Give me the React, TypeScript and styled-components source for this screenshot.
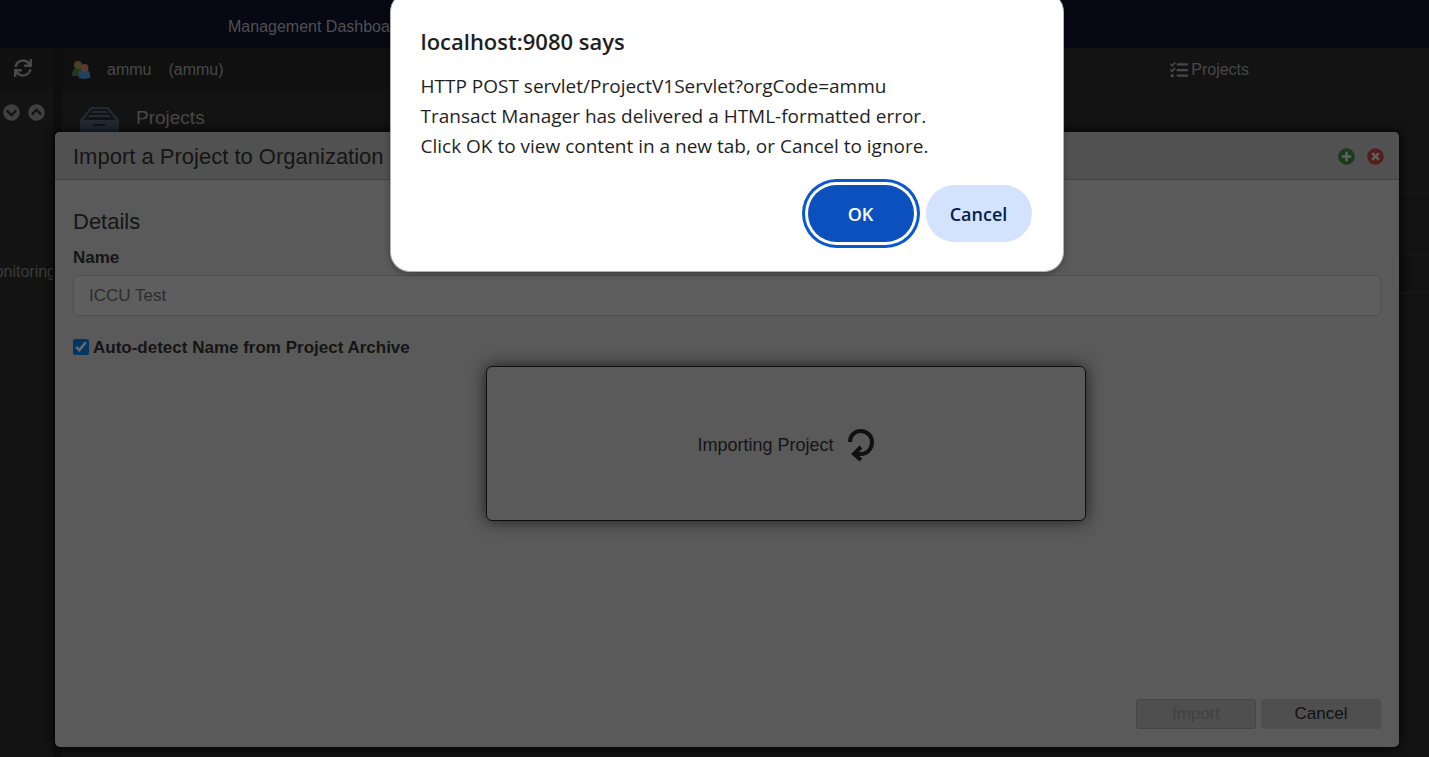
import React from "react";
import styled, { createGlobalStyle } from "styled-components";
import {
  FaChevronCircleDown,
  FaChevronCircleUp,
  FaPlusCircle,
  FaSync,
  FaTasks,
  FaTimesCircle,
} from "react-icons/fa";

const GlobalStyle = createGlobalStyle`
  * { box-sizing: border-box; }
  body {
    margin: 0;
    background: #131313;
    color: #484848;
    font: 16px/24px "Liberation Sans", Arial, sans-serif;
    overflow: hidden;
  }
  button, input { font: inherit; color: inherit; }
  h1, h2, h3, p { margin: 0; font-weight: 400; }
`;

const Page = styled.div`
  position: relative;
  display: flex;
  flex-direction: column;
  min-height: 100vh;
  overflow: hidden;
`;

const TopBar = styled.nav`
  display: flex;
  align-items: center;
  height: 48px;
  padding: 6px 228px 0;
  background: #060814;
`;

const TopLink = styled.a`
  color: #505050;
  text-decoration: none;
`;

const Workspace = styled.div`
  display: flex;
  flex: 1;
`;

const Sidebar = styled.aside`
  width: 53px;
  overflow: hidden;
`;

const SidebarHead = styled.div`
  display: flex;
  align-items: center;
  height: 42px;
  padding: 0 14px 2px;
  background: #101010;
`;

const SidebarTools = styled.div`
  display: flex;
  gap: 8px;
  padding: 14px 3px;
`;

const IconButton = styled.button<{ $size: number; $tone: string }>`
  display: flex;
  padding: 0;
  border: 0;
  background: none;
  color: ${(p) => p.$tone};
  font-size: ${(p) => p.$size}px;
`;

const TreeItem = styled.a`
  display: flex;
  justify-content: flex-end;
  width: 56px;
  padding-top: 125px;
  color: #3c3c3c;
  text-decoration: none;
  white-space: nowrap;
`;

const Splitter = styled.div`
  width: 9px;
  background: #0e0e0e;
`;

const Main = styled.main`
  flex: 1;
`;

const MainHead = styled.div`
  display: flex;
  height: 42px;
`;

const Crumbs = styled.div`
  display: flex;
  align-items: center;
  flex: 1;
  gap: 17px;
  padding: 2px 10px 0;
  background: #101010;
`;

const Tabs = styled.div`
  width: 28%;
  padding: 10px 0 0 124px;
`;

const TabLink = styled.a`
  display: flex;
  align-items: center;
  gap: 3px;
  color: #484848;
  text-decoration: none;
  svg { font-size: 18px; }
`;

const SectionHead = styled.div`
  display: flex;
  align-items: flex-start;
  gap: 17px;
  height: 104px;
  padding: 16px 18px;
  border-bottom: 1px solid #1a1a1a;
`;

const SectionTitle = styled.h1`
  font-size: 19px;
  line-height: 24px;
`;

const ListRow = styled.div<{ $height: number; $dark?: boolean }>`
  height: ${(p) => p.$height}px;
  padding-right: 20px;
  border-bottom: 1px solid #1a1a1a;
  background: ${(p) => (p.$dark ? "#101010" : "transparent")};
  background-clip: content-box;
`;

const ModalLayer = styled.div`
  position: absolute;
  inset: 0;
  display: flex;
  padding: 132px 30px 10px 55px;
`;

const Modal = styled.section`
  position: relative;
  display: flex;
  flex: 1;
  flex-direction: column;
  border-radius: 5px;
  background: #5a5a5a;
  color: #151515;
  box-shadow: 0 0 12px #000000;
`;

const ModalHead = styled.header`
  display: flex;
  align-items: center;
  justify-content: space-between;
  height: 48px;
  padding: 2px 15px 0 18px;
  border-bottom: 1px solid #434343;
  border-radius: 5px 5px 0 0;
  background: #515151;
`;

const Heading = styled.h2`
  font-size: 22px;
  line-height: 32px;
`;

const HeadActions = styled.div`
  display: flex;
  gap: 12px;
`;

const RoundButton = styled(IconButton)`
  border-radius: 50%;
  background: radial-gradient(#606060 50%, transparent 55%);
`;

const Form = styled.form`
  display: flex;
  flex: 1;
  flex-direction: column;
  padding: 26px 18px 18px;
`;

const FieldLabel = styled.label`
  margin: 8px 0 5px;
  font-size: 17px;
  font-weight: 700;
`;

const TextInput = styled.input`
  height: 41px;
  padding: 0 15px;
  border: 1px solid #505050;
  border-radius: 5px;
  background: #5e5e5e;
  color: #2c2c2c;
  font-size: 17px;
`;

const CheckRow = styled.label`
  display: flex;
  align-items: center;
  gap: 4px;
  margin-top: 20px;
  font-size: 17px;
  font-weight: 700;
`;

const CheckBox = styled.input`
  width: 16px;
  height: 16px;
  margin: 0 0 2px;
  accent-color: #0080e8;
  filter: brightness(0.42);
`;

const FormActions = styled.div`
  display: flex;
  justify-content: flex-end;
  gap: 5px;
  margin-top: auto;
`;

const FormButton = styled.button`
  width: 120px;
  height: 30px;
  padding: 0;
  border: 1px solid #4f4f4f;
  border-radius: 3px;
  background: #4f4f4f;
  color: #111111;
  font-size: 17px;
  &:disabled {
    border-color: #454545;
    color: #414141;
  }
`;

const ProgressLayer = styled.div`
  position: absolute;
  inset: 8px 0 0 118px;
  display: flex;
  align-items: center;
  justify-content: center;
  pointer-events: none;
`;

const Progress = styled.div`
  display: flex;
  align-items: center;
  justify-content: center;
  gap: 13px;
  width: 600px;
  height: 155px;
  padding-top: 3px;
  border: 1px solid #101010;
  border-radius: 6px;
  background: #5a5a5a;
  font-size: 18px;
  box-shadow: 0 0 16px #1c1c1c;
`;

const AlertLayer = styled.div`
  position: absolute;
  inset: -8px 0 auto 24px;
  display: flex;
  justify-content: center;
`;

const Alert = styled.div`
  width: 674px;
  padding: 33px 31px 29px 30px;
  border: 1px solid #b0b2b1;
  border-top: 0;
  border-radius: 20px;
  background: #ffffff;
  color: #1f1f1f;
  font-family: "Open Sans", "Noto Sans", sans-serif;
  box-shadow: 0 2px 6px rgba(0, 0, 0, 0.3);
`;

const AlertTitle = styled.h2`
  font-size: 22px;
  font-weight: 600;
  line-height: 32px;
`;

const AlertText = styled.p`
  margin-top: 14px;
  font-size: 19px;
  line-height: 30px;
  white-space: pre-line;
`;

const AlertActions = styled.div`
  display: flex;
  justify-content: flex-end;
  gap: 12px;
  margin-top: 24px;
`;

const AlertButton = styled.button<{ $primary?: boolean }>`
  width: 106px;
  height: 57px;
  padding: 0;
  border: 0;
  border-radius: 29px;
  background: ${(p) => (p.$primary ? "#0b50bd" : "#d3e3fd")};
  color: ${(p) => (p.$primary ? "#ffffff" : "#041e49")};
  box-shadow: ${(p) => (p.$primary ? "0 0 0 3px #ffffff, 0 0 0 6px #0b57d0" : "none")};
  font-size: 18px;
  font-weight: 600;
`;

const UsersIcon = () => (
  <svg width="18" height="20" viewBox="0 -1 18 20" aria-hidden="true">
    <path d="M0 14c0-5 2-7 6-7s6 3 6 8H2c-1 0-2 0-2-1z" fill="#233a1a" />
    <circle cx="6" cy="4" r="4" fill="#4c3f24" />
    <path d="M7 17c-2-6 1-9 5-9s7 3 6 9c-2 1-9 1-11 0z" fill="#23405c" />
    <circle cx="12.500" cy="7" r="4" fill="#573c33" />
  </svg>
);

const TrayIcon = () => (
  <svg width="39" height="32" viewBox="0 0 39 32" fill="#222b34" aria-hidden="true">
    <path
      fillRule="evenodd"
      d="M11 1h17l11 13v18H0V14zM12 3L4 13v1h31v-1L27 3z"
    />
    <path d="M13 5h13l2 2H11zM10 9h19l2 2H8zM5 14h29v2H5z" />
    <path d="M12 18h15l-3 2h-9z" fill="#131313" />
  </svg>
);

const SpinnerIcon = () => (
  <svg
    width="28"
    height="34"
    viewBox="0 -1 28 34"
    fill="none"
    stroke="#111111"
    strokeWidth="4"
    aria-hidden="true"
  >
    <path d="M3 13C3 6 8 2 14 2s11 5 11 11-4 12-11 12H9" />
    <path d="M14 18l-7 7 7 6" />
  </svg>
);

export default function App() {
  return (
    <Page>
      <GlobalStyle />
      <TopBar>
        <TopLink href="#dashboard">Management Dashboard</TopLink>
      </TopBar>
      <Workspace>
        <Sidebar>
          <SidebarHead>
            <IconButton $size={18} $tone="#484848" aria-label="Refresh"><FaSync /></IconButton>
          </SidebarHead>
          <SidebarTools>
            <IconButton $size={17} $tone="#404040" aria-label="Expand all"><FaChevronCircleDown /></IconButton>
            <IconButton $size={17} $tone="#404040" aria-label="Collapse all"><FaChevronCircleUp /></IconButton>
          </SidebarTools>
          <TreeItem href="#monitoring">Monitoring</TreeItem>
        </Sidebar>
        <Splitter />
        <Main>
          <MainHead>
            <Crumbs>
              <UsersIcon />
              <span>ammu</span>
              <span>(ammu)</span>
            </Crumbs>
            <Tabs>
              <TabLink href="#projects"><FaTasks />Projects</TabLink>
            </Tabs>
          </MainHead>
          <SectionHead>
            <TrayIcon />
            <SectionTitle>Projects</SectionTitle>
          </SectionHead>
          <ListRow $height={61} />
          <ListRow $height={38} $dark />
        </Main>
      </Workspace>

      <ModalLayer>
        <Modal role="dialog" aria-labelledby="import-title">
          <ModalHead>
            <Heading id="import-title">Import a Project to Organization ammu</Heading>
            <HeadActions>
              <RoundButton $size={17} $tone="#1b3a1c" aria-label="Maximize"><FaPlusCircle /></RoundButton>
              <RoundButton $size={17} $tone="#561d1d" aria-label="Close"><FaTimesCircle /></RoundButton>
            </HeadActions>
          </ModalHead>
          <Form>
            <Heading>Details</Heading>
            <FieldLabel htmlFor="project-name">Name</FieldLabel>
            <TextInput id="project-name" defaultValue="ICCU Test" />
            <CheckRow>
              <CheckBox type="checkbox" defaultChecked />
              Auto-detect Name from Project Archive
            </CheckRow>
            <FormActions>
              <FormButton type="button" disabled>Import</FormButton>
              <FormButton type="button">Cancel</FormButton>
            </FormActions>
          </Form>
          <ProgressLayer>
            <Progress role="status">
              Importing Project
              <SpinnerIcon />
            </Progress>
          </ProgressLayer>
        </Modal>
      </ModalLayer>

      <AlertLayer>
        <Alert role="alertdialog" aria-labelledby="alert-title">
          <AlertTitle id="alert-title">localhost:9080 says</AlertTitle>
          <AlertText>
            {"HTTP POST servlet/ProjectV1Servlet?orgCode=ammu\nTransact Manager has delivered a HTML-formatted error.\nClick OK to view content in a new tab, or Cancel to ignore."}
          </AlertText>
          <AlertActions>
            <AlertButton $primary>OK</AlertButton>
            <AlertButton>Cancel</AlertButton>
          </AlertActions>
        </Alert>
      </AlertLayer>
    </Page>
  );
}
